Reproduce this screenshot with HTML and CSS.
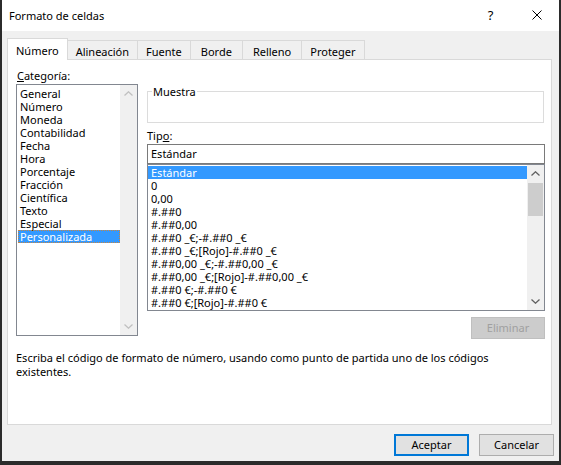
FILE: index.html
```html
<!DOCTYPE html>
<html lang="es">
<head>
<meta charset="utf-8">
<title>Formato de celdas</title>
<link rel="stylesheet" href="styles.css">
</head>
<body>
<div class="window">
  <div class="titlebar">
    <span class="title">Formato de celdas</span>
    <span class="caption-btn help">?</span>
    <span class="caption-btn close">
      <svg width="10" height="10" viewBox="0 0 10 10"><path d="M0.5 0.5 L9.5 9.5 M9.5 0.5 L0.5 9.5" stroke="#000" stroke-width="1" fill="none"/></svg>
    </span>
  </div>
  <div class="body">
    <div class="tabs">
      <div class="tab active">Número</div>
      <div class="tab">Alineación</div>
      <div class="tab">Fuente</div>
      <div class="tab wide">Borde</div>
      <div class="tab wide">Relleno</div>
      <div class="tab">Proteger</div>
    </div>
    <div class="panel">
      <div class="cols">
        <div class="col-left">
          <div class="label cat-label"><u>C</u>ategoría:</div>
          <div class="list cat-list">
            <ul class="items">
              <li>General</li>
              <li>Número</li>
              <li>Moneda</li>
              <li>Contabilidad</li>
              <li>Fecha</li>
              <li>Hora</li>
              <li>Porcentaje</li>
              <li>Fracción</li>
              <li>Científica</li>
              <li>Texto</li>
              <li>Especial</li>
              <li class="selected focused">Personalizada</li>
            </ul>
            <div class="vscroll disabled">
              <div class="arrow"><svg width="9" height="5" viewBox="0 0 9 5"><path d="M0.5 4.5 L4.5 0.8 L8.5 4.5" stroke="currentColor" stroke-width="1.3" fill="none"/></svg></div>
              <div class="track"></div>
              <div class="arrow"><svg width="9" height="5" viewBox="0 0 9 5"><path d="M0.5 0.5 L4.5 4.2 L8.5 0.5" stroke="currentColor" stroke-width="1.3" fill="none"/></svg></div>
            </div>
          </div>
        </div>
        <div class="col-right">
          <fieldset class="sample">
            <legend>Muestra</legend>
            <div class="sample-body"></div>
          </fieldset>
          <div class="label tipo-label">Tip<u>o</u>:</div>
          <div class="input">Estándar</div>
          <div class="list type-list">
            <ul class="items">
              <li class="selected">Estándar</li>
              <li>0</li>
              <li>0,00</li>
              <li>#.##0</li>
              <li>#.##0,00</li>
              <li>#.##0 _€;-#.##0 _€</li>
              <li>#.##0 _€;[Rojo]-#.##0 _€</li>
              <li>#.##0,00 _€;-#.##0,00 _€</li>
              <li>#.##0,00 _€;[Rojo]-#.##0,00 _€</li>
              <li>#.##0 €;-#.##0 €</li>
              <li>#.##0 €;[Rojo]-#.##0 €</li>
            </ul>
            <div class="vscroll">
              <div class="arrow"><svg width="9" height="5" viewBox="0 0 9 5"><path d="M0.5 4.5 L4.5 0.8 L8.5 4.5" stroke="currentColor" stroke-width="1.3" fill="none"/></svg></div>
              <div class="track"><div class="thumb"></div></div>
              <div class="arrow"><svg width="9" height="5" viewBox="0 0 9 5"><path d="M0.5 0.5 L4.5 4.2 L8.5 0.5" stroke="currentColor" stroke-width="1.3" fill="none"/></svg></div>
            </div>
          </div>
          <div class="actions">
            <button class="btn btn-disabled">Eliminar</button>
          </div>
        </div>
      </div>
      <p class="desc">Escriba el código de formato de número, usando como punto de partida uno de los códigos existentes.</p>
    </div>
    <div class="footer">
      <button class="btn btn-default">Aceptar</button>
      <button class="btn">Cancelar</button>
    </div>
  </div>
</div>
</body>
</html>
```

FILE: styles.css
```css
* { box-sizing: border-box; }
html, body { margin: 0; padding: 0; }
body {
  width: 561px;
  height: 465px;
  font-family: "Noto Sans", sans-serif;
  font-size: 11px;
  color: #000;
  background: #2b2b2b;
}
.window {
  width: 561px;
  height: 465px;
  border-left: 2px solid #2b2b2b;
  border-right: 2px solid #2b2b2b;
  border-bottom: 4px solid #2b2b2b;
  background: #f0f0f0;
  display: flex;
  flex-direction: column;
}
.titlebar {
  height: 31px;
  background: #fff;
  display: flex;
  align-items: center;
  padding-left: 7px;
  flex: none;
}
.title { flex: 1; font-size: 11px; }
.caption-btn {
  width: 46px;
  height: 31px;
  display: flex;
  align-items: center;
  justify-content: center;
}
.help { font-size: 13px; padding-left: 1px; padding-bottom: 1px; }
.close { padding-left: 1px; padding-bottom: 1px; }

.body {
  flex: 1;
  padding: 7px 5px 5px 5px;
  display: flex;
  flex-direction: column;
}
.tabs {
  display: flex;
  height: 21px;
  position: relative;
  z-index: 1;
}
.tab {
  height: 19px;
  margin-top: 2px;
  padding: 3px 8px 0 8px;
  line-height: 15px;
  border: 1px solid #d9d9d9;
  border-bottom: none;
  background: #f0f0f0;
  margin-left: -1px;
  white-space: nowrap;
}
.tab.wide { padding: 3px 10px 0 10px; }
.tab.active {
  margin-left: 0;
  margin-top: 0;
  height: 22px;
  padding: 4px 8px 0 8px;
  background: #fff;
  position: relative;
  z-index: 2;
}
.panel {
  height: 366px;
  margin-right: 2px;
  background: #fff;
  border: 1px solid #d9d9d9;
  padding: 0 6px 0 8px;
  display: flex;
  flex-direction: column;
}
.cols {
  display: grid;
  grid-template-columns: 122px 398px;
  column-gap: 9px;
}
.label { line-height: 13px; height: 13px; white-space: nowrap; }
.cat-label { margin-top: 9px; margin-left: 1px; }
.list {
  display: flex;
  border: 1px solid #828790;
  background: #fff;
}
.cat-list { margin-top: 2px; height: 252px; }
.items {
  list-style: none;
  margin: 0;
  flex: 1;
  min-width: 0;
}
.items li {
  height: 13px;
  line-height: 13px;
  white-space: pre;
}
.cat-list .items { padding: 2px 0 0 1px; }
.cat-list .items li { padding-left: 2px; }
.type-list .items { padding: 1px 0 0 0; }
.type-list .items li { padding-left: 3px; }
.items li.selected { background: #3399ff; color: #fff; }
.items li.focused { outline: 1px dotted #c9853f; outline-offset: -1px; }

.vscroll {
  width: 17px;
  flex: none;
  background: #f0f0f0;
  display: flex;
  flex-direction: column;
  color: #606060;
}
.vscroll.disabled { color: #c0c0c0; }
.arrow {
  height: 17px;
  flex: none;
  display: flex;
  align-items: center;
  justify-content: center;
}
.arrow svg { display: block; }
.track { flex: 1; padding: 1px 1px 0 1px; }
.thumb { height: 33px; background: #cdcdcd; }

.col-right { display: flex; flex-direction: column; }
.sample {
  margin: 24px 0 0 0;
  padding: 0;
  border: 1px solid #dcdcdc;
  min-inline-size: 0;
  width: 397px;
}
.sample legend {
  margin-left: 4px;
  padding: 0 1px;
  line-height: 15px;
  height: 15px;
}
.sample-body { height: 23px; }
.tipo-label { margin-top: 6px; }
.input {
  margin-top: 2px;
  height: 20px;
  border: 1px solid #7a7a7a;
  padding-left: 3px;
  line-height: 18px;
}
.type-list { height: 147px; }
.actions {
  margin-top: 6px;
  display: flex;
  justify-content: flex-end;
}
.btn {
  font-family: "Noto Sans", sans-serif;
  font-size: 11px;
  width: 75px;
  height: 22px;
  padding: 0;
  border: 1px solid #adadad;
  background: #e1e1e1;
  color: #000;
  line-height: 18px;
}
.btn-disabled {
  width: 74px;
  background: #cccccc;
  border-color: #bfbfbf;
  color: #a0a0a0;
}
.btn-default { border: 2px solid #0078d7; }
.desc {
  margin: 12px 0 0 0;
  line-height: 14px;
  width: 520px;
}
.footer {
  margin-top: 9px;
  display: flex;
  justify-content: flex-end;
  gap: 10px;
}
```
